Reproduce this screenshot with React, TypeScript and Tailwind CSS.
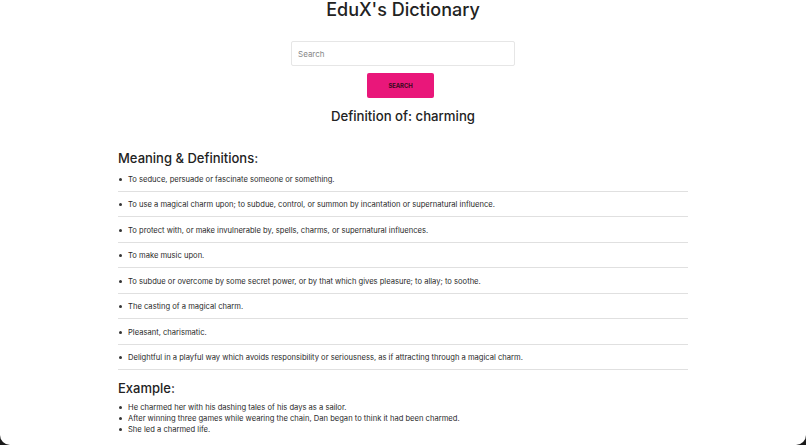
const definitions = [
  'To seduce, persuade or fascinate someone or something.',
  'To use a magical charm upon; to subdue, control, or summon by incantation or supernatural influence.',
  'To protect with, or make invulnerable by, spells, charms, or supernatural influences.',
  'To make music upon.',
  'To subdue or overcome by some secret power, or by that which gives pleasure; to allay; to soothe.',
  'The casting of a magical charm.',
  'Pleasant, charismatic.',
  'Delightful in a playful way which avoids responsibility or seriousness, as if attracting through a magical charm.',
]

const examples = [
  'He charmed her with his dashing tales of his days as a sailor.',
  'After winning three games while wearing the chain, Dan began to think it had been charmed.',
  'She led a charmed life.',
]

function Bullet() {
  return <span className="w-[3px] h-[3px] rounded-full bg-[#333] shrink-0 mr-[6px] ml-[1px]" />
}

export default function App() {
  return (
    <div className="w-[806px] h-[445px] bg-[#1a1a1a] overflow-hidden">
      <div
        className="h-full bg-white rounded-b-[10px] flex flex-col items-center text-[#222]"
        style={{ fontFamily: 'Inter, "Noto Sans", sans-serif' }}
      >
        <h1 className="text-[18px] leading-[20px] font-medium">EduX's Dictionary</h1>

        <input
          type="text"
          placeholder="Search"
          className="mt-[21px] w-[224px] h-[25px] border border-[#e6e6e6] rounded-[2px] px-[6px] text-[8px] placeholder:text-[#888] outline-none"
        />
        <button className="mt-[7px] mr-[5px] w-[67px] h-[25px] bg-[#e9177a] rounded-[2px] text-[6px] font-bold text-[#3a0a20] tracking-tight">
          SEARCH
        </button>

        <h2 className="mt-[10px] text-[13.2px] leading-[16px] font-medium">Definition of: charming</h2>

        <div className="w-[570px] mt-[26px]">
          <h3 className="text-[13px] leading-[16px] font-medium">Meaning &amp; Definitions:</h3>
          <ul>
            {definitions.map((d) => (
              <li key={d} className="h-[25.5px] pt-[2px] flex items-center border-b border-[#e0e0e0] text-[7.6px] text-[#2a2a2a]">
                <Bullet />
                {d}
              </li>
            ))}
          </ul>

          <h3 className="mt-[10px] text-[13px] leading-[16px] font-medium">Example:</h3>
          <ul className="mt-[6px]">
            {examples.map((e) => (
              <li key={e} className="h-[11px] flex items-center text-[7.6px] text-[#2a2a2a]">
                <Bullet />
                {e}
              </li>
            ))}
          </ul>
        </div>
      </div>
    </div>
  )
}
